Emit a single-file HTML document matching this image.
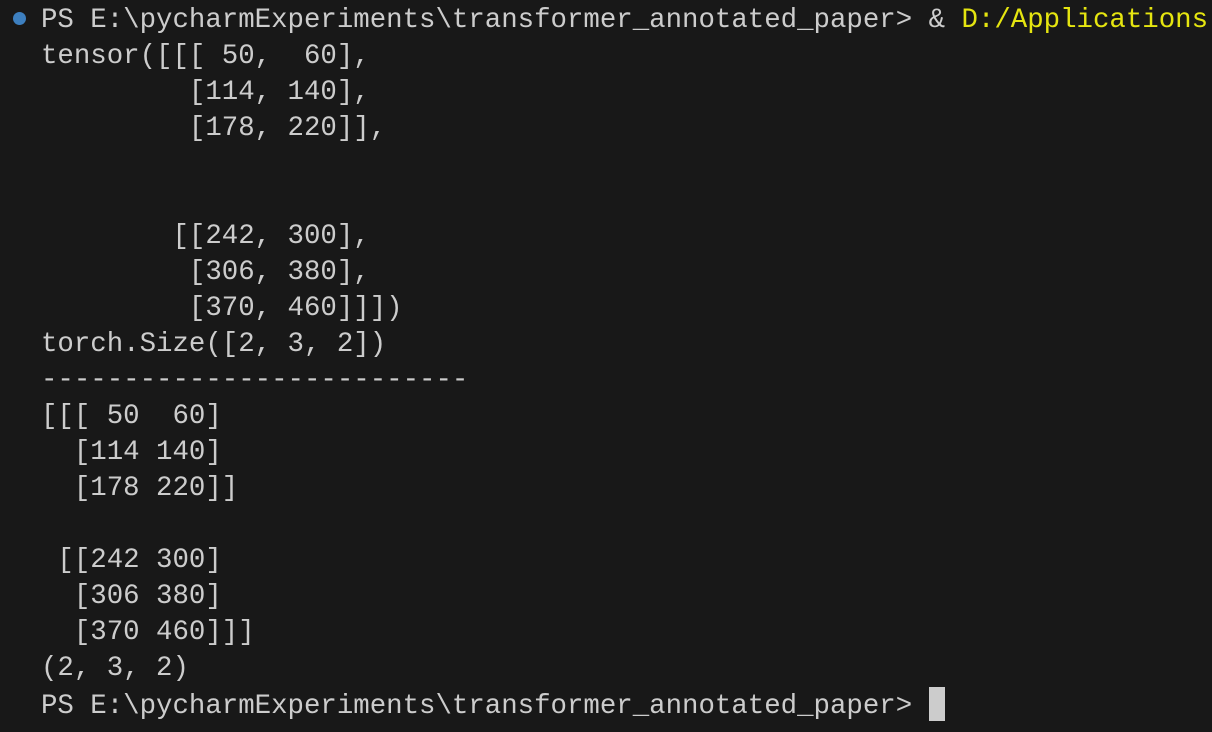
<!DOCTYPE html>
<html><head><style>
html,body{margin:0;padding:0;background:#181818;width:1212px;height:732px;overflow:hidden}
pre{position:absolute;left:41px;top:3px;margin:0;font-family:"Liberation Mono",monospace;font-size:27.4px;line-height:36px;color:#cccccc;white-space:pre}
.y{color:#e5e510}
.dot{position:absolute;left:13px;top:12px;width:13px;height:13px;border-radius:50%;background:#3d7fbf}
.cur{display:inline-block;width:16px;height:34px;background:#cccccc;vertical-align:-8px}
</style></head><body>
<div class="dot"></div>
<pre>PS E:\pycharmExperiments\transformer_annotated_paper&gt; &amp; <span class="y">D:/Applications</span>
tensor([[[ 50,  60],
         [114, 140],
         [178, 220]],


        [[242, 300],
         [306, 380],
         [370, 460]]])
torch.Size([2, 3, 2])
--------------------------
[[[ 50  60]
  [114 140]
  [178 220]]

 [[242 300]
  [306 380]
  [370 460]]]
(2, 3, 2)
PS E:\pycharmExperiments\transformer_annotated_paper&gt; <span class="cur"></span></pre>
</body></html>
